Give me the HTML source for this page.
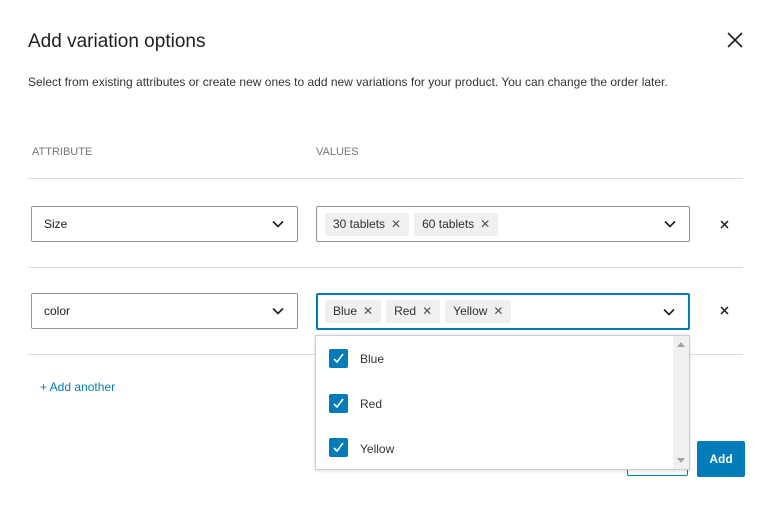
<!DOCTYPE html><html><head><style>
body{margin:0;width:774px;height:505px;background:#fff;font-family:"Liberation Sans",sans-serif;color:#1e1e1e;position:relative;overflow:hidden}
.a{position:absolute}
.inp{position:absolute;border:1px solid #949494;border-radius:2px;background:#fff;box-sizing:border-box;font-size:12px}
.chev{position:absolute;right:13px;top:50%;margin-top:-4px}
.tag{display:inline-block;background:#f0f0f0;border-radius:2px;padding:0 8px 0 8px;height:23px;line-height:23px;font-size:12px;color:#2f2f2f;margin-right:5px}
.tag b{font-weight:normal;margin-left:6px;color:#555}
.hr{position:absolute;left:28px;width:715px;height:1px;background:#ddd}
.cb{position:absolute;left:329px;width:19px;height:19px;background:#007cba;border-radius:2px}
.lab{position:absolute;left:360px;font-size:12px;color:#333}
</style></head><body>
<div class="a" style="left:28px;top:31px;font-size:19px;color:#1e1e1e">Add variation options</div>
<svg class="a" style="left:727px;top:32px" width="16" height="16"><path d="M1 1L15 15M15 1L1 15" stroke="#1e1e1e" stroke-width="1.6"/></svg>
<div class="a" style="left:28px;top:75px;font-size:12px;color:#333">Select from existing attributes or create new ones to add new variations for your product. You can change the order later.</div>
<div class="a" style="left:32px;top:146px;font-size:11px;color:#757575">ATTRIBUTE</div>
<div class="a" style="left:316px;top:146px;font-size:11px;color:#757575">VALUES</div>
<div class="hr" style="top:178px"></div>
<div class="hr" style="top:267px"></div>
<div class="hr" style="top:354px"></div>
<div class="inp" style="left:31px;top:206px;width:267px;height:36px;padding:10px 12px">Size<svg class="chev" width="12" height="8"><path d="M1 1.5L6 6.5L11 1.5" fill="none" stroke="#1e1e1e" stroke-width="1.6"/></svg></div>
<div class="inp" style="left:316px;top:206px;width:374px;height:36px;padding:6px 8px">
<span class="tag">30 tablets<b>✕</b></span><span class="tag">60 tablets<b>✕</b></span>
<svg class="chev" width="12" height="8"><path d="M1 1.5L6 6.5L11 1.5" fill="none" stroke="#1e1e1e" stroke-width="1.6"/></svg></div>
<svg class="a" style="left:720px;top:220px" width="9" height="9"><path d="M1 1L8 8M8 1L1 8" stroke="#1e1e1e" stroke-width="1.5"/></svg>
<div class="inp" style="left:31px;top:293px;width:267px;height:36px;padding:10px 12px">color<svg class="chev" width="12" height="8"><path d="M1 1.5L6 6.5L11 1.5" fill="none" stroke="#1e1e1e" stroke-width="1.6"/></svg></div>
<div class="inp" style="left:316px;top:293px;width:374px;height:37px;padding:6px 8px;border:2px solid #007cba;padding:5px 7px">
<span class="tag">Blue<b>✕</b></span><span class="tag">Red<b>✕</b></span><span class="tag">Yellow<b>✕</b></span>
<svg class="chev" width="12" height="8"><path d="M1 1.5L6 6.5L11 1.5" fill="none" stroke="#1e1e1e" stroke-width="1.6"/></svg></div>
<svg class="a" style="left:720px;top:306px" width="9" height="9"><path d="M1 1L8 8M8 1L1 8" stroke="#1e1e1e" stroke-width="1.5"/></svg>
<div class="a" style="left:40px;top:380px;font-size:12px;color:#007cba">+ Add another</div>
<div class="a" style="left:627px;top:441px;width:61px;height:35px;border:1px solid #007cba;box-sizing:border-box;border-radius:2px"></div>
<div class="a" style="left:697px;top:441px;width:48px;height:36px;background:#007cba;border-radius:2px;color:#fff;font-size:12px;font-weight:bold;text-align:center;line-height:36px">Add</div>
<div class="a" style="left:315px;top:335px;width:375px;height:135px;background:#fff;border:1px solid #ccc;box-sizing:border-box;box-shadow:0 1px 3px rgba(0,0,0,.15)"></div>
<div class="a" style="left:673px;top:336px;width:16px;height:133px;background:#f0f0f0"></div>
<svg class="a" style="left:677px;top:342px" width="8" height="5"><path d="M0 5L4 0L8 5Z" fill="#a3a3a3"/></svg>
<svg class="a" style="left:677px;top:458px" width="8" height="5"><path d="M0 0L4 5L8 0Z" fill="#a3a3a3"/></svg>
<div class="cb" style="top:349px"></div><div class="cb" style="top:394px"></div><div class="cb" style="top:438px"></div>
<svg class="a" style="left:329px;top:349px" width="19" height="109"><g fill="none" stroke="#fff" stroke-width="1.6"><path d="M5 10L8 13L14 5"/><path d="M5 55L8 58L14 50"/><path d="M5 99L8 102L14 94"/></g></svg>
<div class="lab" style="top:352px">Blue</div><div class="lab" style="top:397px">Red</div><div class="lab" style="top:442px">Yellow</div>
</body></html>
